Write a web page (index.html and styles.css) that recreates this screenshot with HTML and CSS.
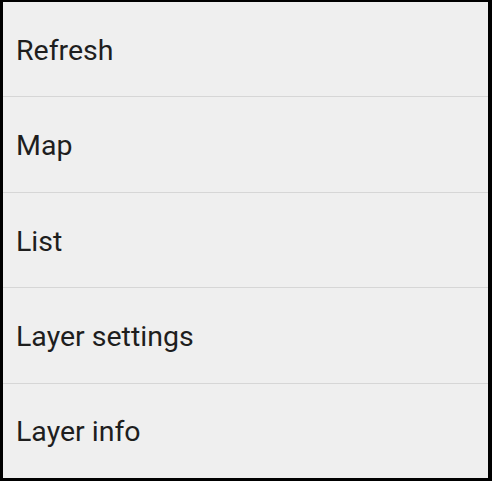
FILE: index.html
```html
<!DOCTYPE html>
<html lang="en">

<head>
    <meta charset="utf-8">
    <title>Menu</title>
    <link rel="stylesheet" href="styles.css">
</head>

<body>
    <ul class="menu">
        <li class="item">Refresh</li>
        <li class="item">Map</li>
        <li class="item">List</li>
        <li class="item">Layer settings</li>
        <li class="item">Layer info</li>
    </ul>
</body>

</html>
```

FILE: styles.css
```css
* {
    box-sizing: border-box;
    margin: 0;
    padding: 0;
}

body {
    width: 492px;
    height: 481px;
    background: #000;
    font-family: Roboto, "Noto Sans", sans-serif;
}

.menu {
    list-style: none;
    display: flex;
    flex-direction: column;
    height: 481px;
    border-style: solid;
    border-color: #000;
    border-width: 2px 4px 3px 3px;
    background-color: #efefef;
}

.item {
    flex: 1;
    display: flex;
    align-items: center;
    padding-left: 13px;
    padding-top: 2px;
    font-size: 28.5px;
    color: #1e1e1e;
    border-bottom: 1px solid #d6d6d6;
}

.item:last-child {
    border-bottom: none;
}
```
